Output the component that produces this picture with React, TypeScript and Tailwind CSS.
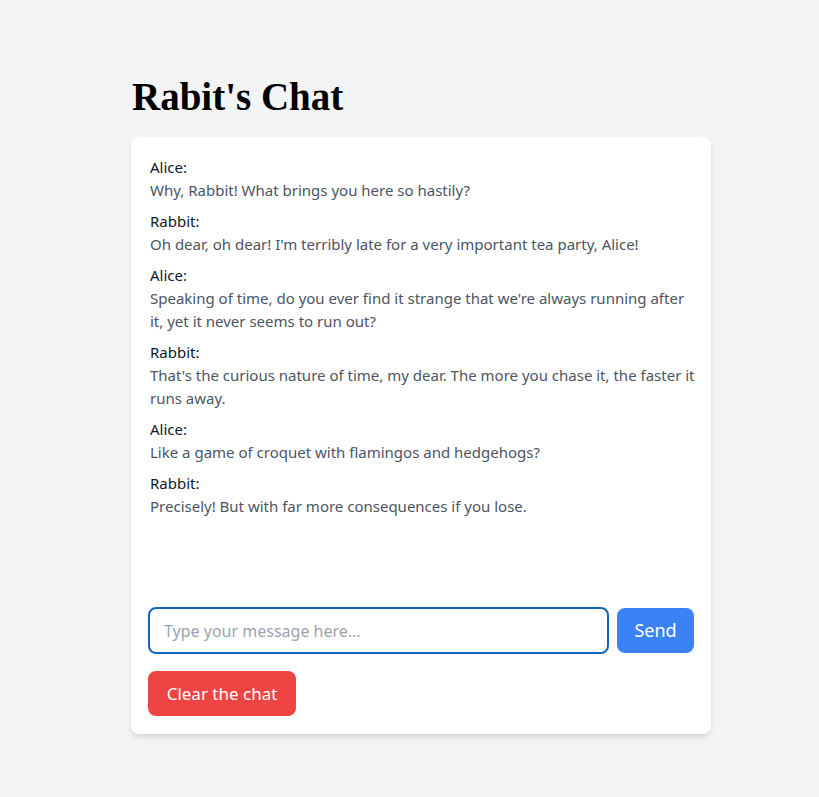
import { useState } from "react"

const messages = [
    { sender: "Alice", text: "Why, Rabbit! What brings you here so hastily?" },
    { sender: "Rabbit", text: "Oh dear, oh dear! I'm terribly late for a very important tea party, Alice!" },
    { sender: "Alice", text: "Speaking of time, do you ever find it strange that we're always running after it, yet it never seems to run out?" },
    { sender: "Rabbit", text: "That's the curious nature of time, my dear. The more you chase it, the faster it runs away." },
    { sender: "Alice", text: "Like a game of croquet with flamingos and hedgehogs?" },
    { sender: "Rabbit", text: "Precisely! But with far more consequences if you lose." },
]

const App = () => {
    const [input, setInput] = useState("")

    return (
        <div className="min-h-screen w-full bg-[#f3f4f6] pt-[77px] pl-[131px] font-['Segoe_UI','Noto_Sans',sans-serif]">
            <div className="w-[580px] flex flex-col">
                <h1 className="font-['Liberation_Serif',serif] font-bold text-[39px] leading-10 text-black mb-5 pl-[1px]">Rabit's Chat</h1>
                <div className="w-full bg-white rounded-lg shadow-md px-[17px] pt-[19px] pb-[18px] flex flex-col">
                    <div className="h-[431px] pl-[2px] mr-[-4px] flex flex-col gap-2">
                        {messages.map((m, i) => (
                            <div key={i} className="flex flex-col">
                                <span className="text-[#111827] text-[15px] leading-[23px]">{m.sender}:</span>
                                <span className="text-[#4b5563] text-[15px] leading-[23px]">{m.text}</span>
                            </div>
                        ))}
                    </div>
                    <div className="flex items-center gap-2 mt-5">
                        <input
                            autoFocus
                            value={input}
                            onChange={(e) => setInput(e.target.value)}
                            placeholder="Type your message here..."
                            className="flex-1 h-[47px] rounded-lg border-2 border-[#1565c0] px-[14px] text-[16px] text-[#374151] placeholder:text-[#9ca3af] outline-none"
                        />
                        <button className="h-[45px] w-[77px] rounded-lg bg-[#3b82f6] text-white text-[18px]">Send</button>
                    </div>
                    <div className="mt-[17px]">
                        <button className="h-[45px] w-[148px] rounded-lg bg-[#ef4444] text-white text-[17px]">Clear the chat</button>
                    </div>
                </div>
            </div>
        </div>
    )
}

export default App
